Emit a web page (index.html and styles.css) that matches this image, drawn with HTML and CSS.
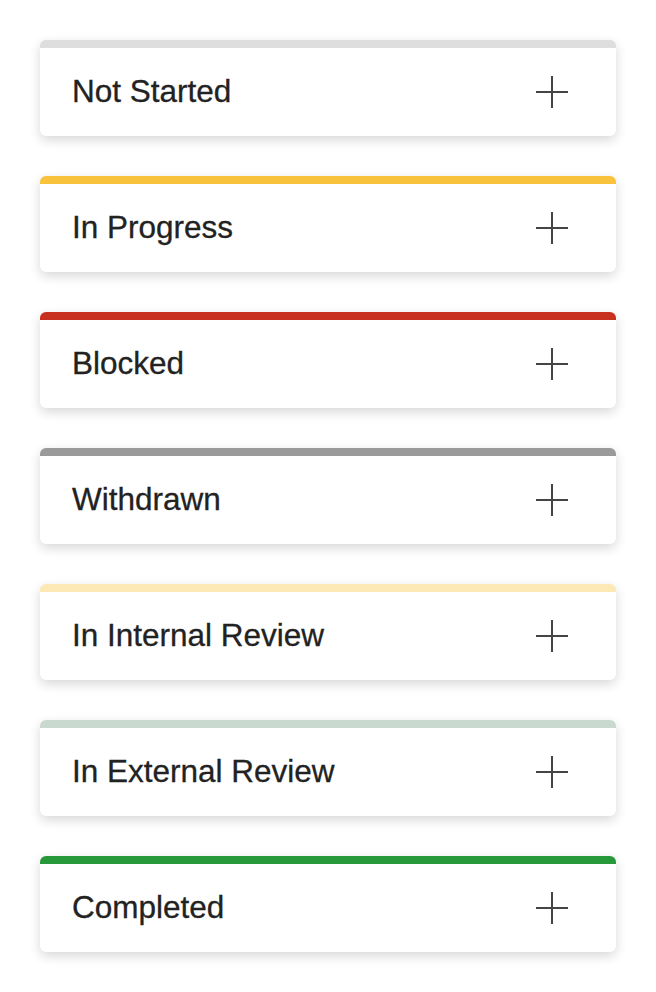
FILE: index.html
```html
<!DOCTYPE html>
<html lang="en">
<head>
    <meta charset="UTF-8">
    <meta name="viewport" content="width=device-width, initial-scale=1.0">
    <title>Status Columns</title>
    <link rel="stylesheet" href="styles.css">
</head>
<body>
    <div class="columns">
        <div class="column not-started">
            <span class="title">Not Started</span>
            <button class="add" aria-label="Add"><svg viewBox="0 0 32 32"><path d="M16 0v32M0 16h32"/></svg></button>
        </div>
        <div class="column in-progress">
            <span class="title">In Progress</span>
            <button class="add" aria-label="Add"><svg viewBox="0 0 32 32"><path d="M16 0v32M0 16h32"/></svg></button>
        </div>
        <div class="column blocked">
            <span class="title">Blocked</span>
            <button class="add" aria-label="Add"><svg viewBox="0 0 32 32"><path d="M16 0v32M0 16h32"/></svg></button>
        </div>
        <div class="column withdrawn">
            <span class="title">Withdrawn</span>
            <button class="add" aria-label="Add"><svg viewBox="0 0 32 32"><path d="M16 0v32M0 16h32"/></svg></button>
        </div>
        <div class="column internal-review">
            <span class="title">In Internal Review</span>
            <button class="add" aria-label="Add"><svg viewBox="0 0 32 32"><path d="M16 0v32M0 16h32"/></svg></button>
        </div>
        <div class="column external-review">
            <span class="title">In External Review</span>
            <button class="add" aria-label="Add"><svg viewBox="0 0 32 32"><path d="M16 0v32M0 16h32"/></svg></button>
        </div>
        <div class="column completed">
            <span class="title">Completed</span>
            <button class="add" aria-label="Add"><svg viewBox="0 0 32 32"><path d="M16 0v32M0 16h32"/></svg></button>
        </div>
    </div>
</body>
</html>
```

FILE: styles.css
```css
body {
    margin: 0;
    padding: 40px;
    background-color: #fff;
    font-family: "Liberation Sans", Arial, sans-serif;
    color: #222;
}
.columns {
    display: flex;
    flex-direction: column;
    gap: 40px;
}
.column {
    display: flex;
    align-items: center;
    justify-content: space-between;
    height: 88px;
    padding: 0 48px 0 32px;
    border-top: 8px solid #dedede;
    border-radius: 6px;
    background-color: #fff;
    box-shadow: 0 4px 12px rgba(0, 0, 0, 0.16);
}
.title {
    font-size: 31.5px;
    line-height: 1;
    -webkit-text-stroke: 0.3px #222;
}
.add {
    display: flex;
    padding: 0;
    border: none;
    background: none;
    cursor: pointer;
}
.add svg {
    width: 32px;
    height: 32px;
    stroke: #444;
    stroke-width: 2;
    fill: none;
}

.in-progress { border-top-color: #f8c23c; }
.blocked { border-top-color: #c8301f; }
.withdrawn { border-top-color: #9a9a9a; }
.internal-review { border-top-color: #fce9b6; }
.external-review { border-top-color: #cad9d0; }
.completed { border-top-color: #27993a; }
```
